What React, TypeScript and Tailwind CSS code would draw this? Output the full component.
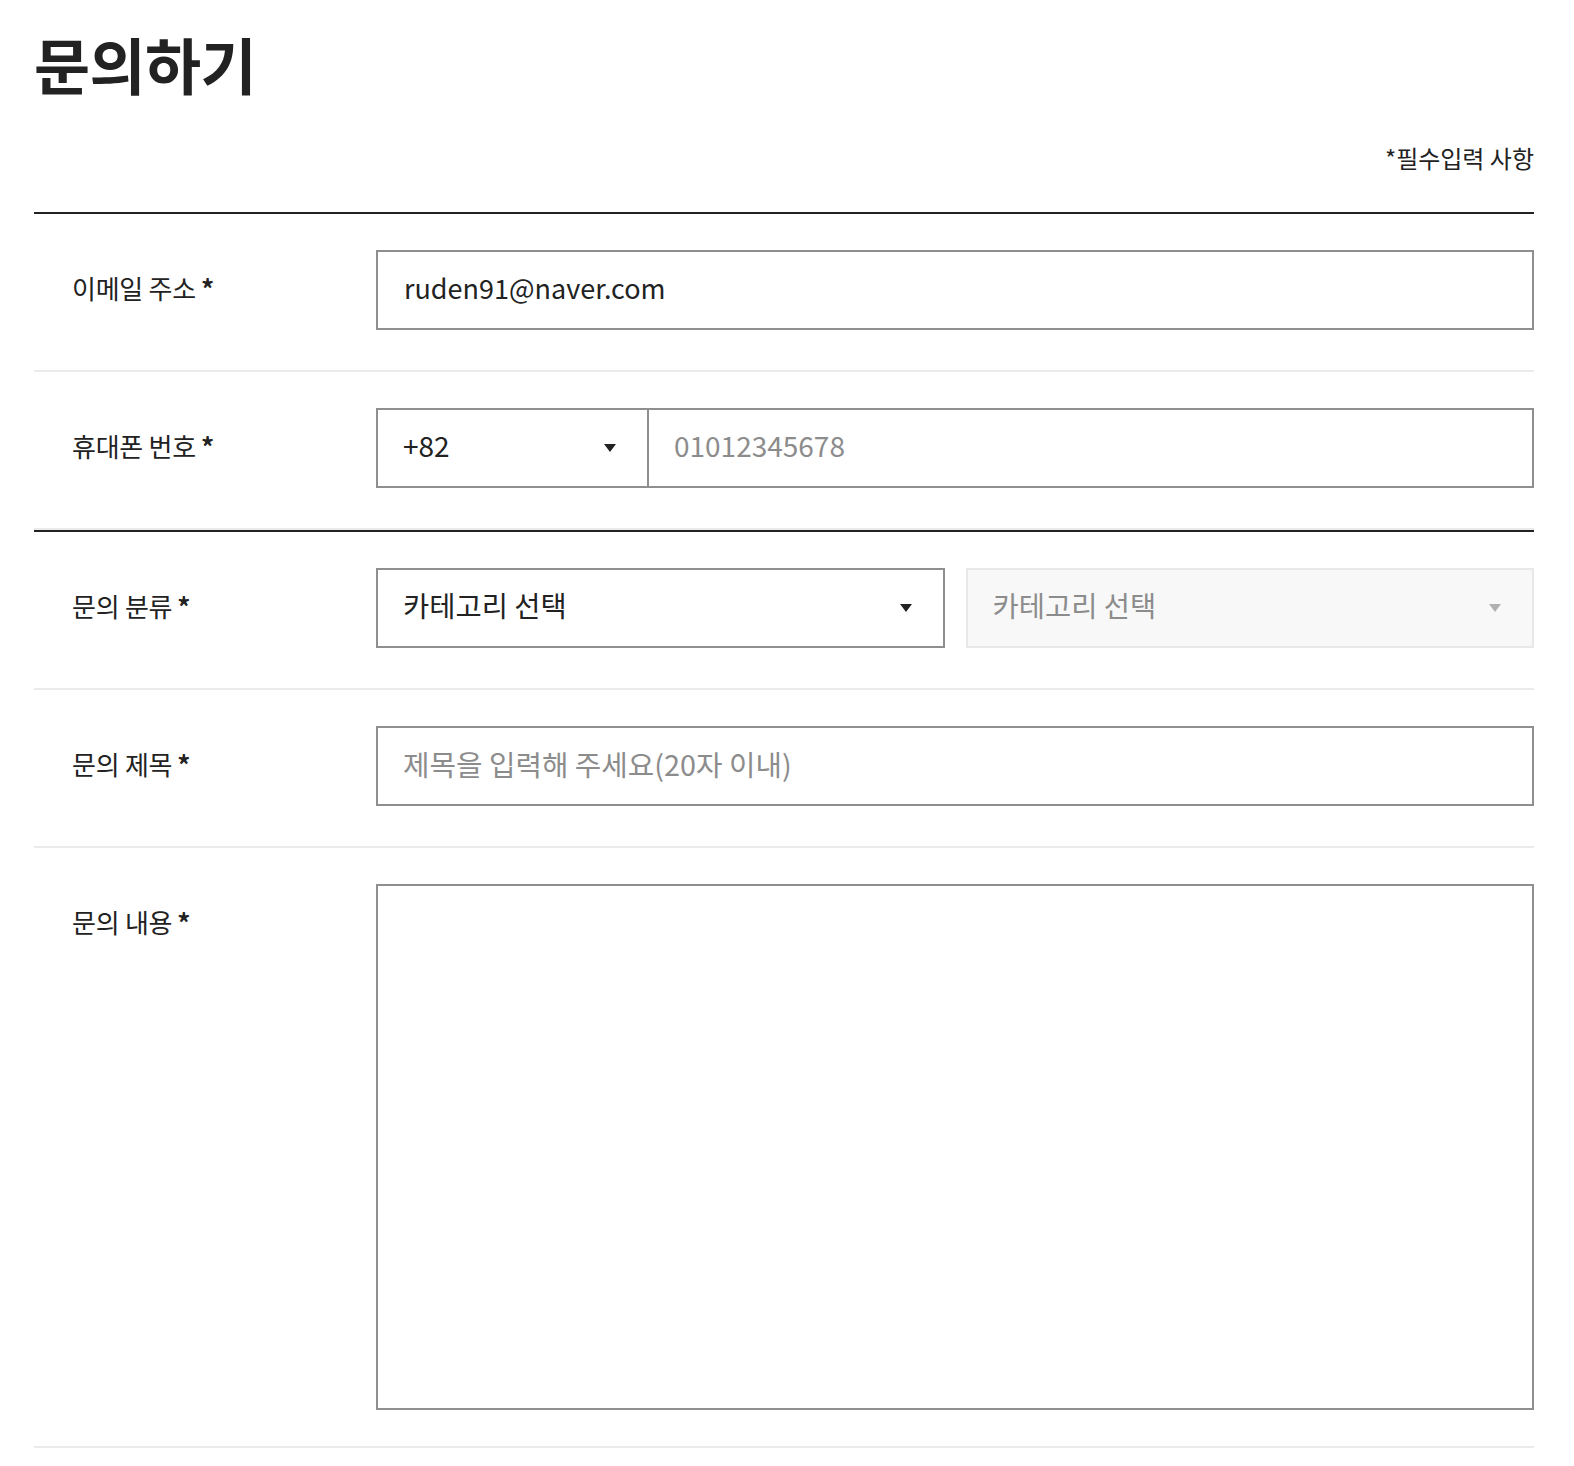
import React from 'react'

const Caret: React.FC<{ muted?: boolean }> = ({ muted }) => (
  <svg
    width="12"
    height="8"
    viewBox="0 0 12 8"
    className="pointer-events-none absolute right-[33px] top-1/2 -translate-y-1/2"
  >
    <polygon points="0,0 12,0 6,8" fill={muted ? '#b0b0b0' : '#222222'} />
  </svg>
)

const Label: React.FC<{ text: string }> = ({ text }) => (
  <div className="w-[342px] shrink-0 pl-[38px] pb-[6px] h-[80px] flex items-center text-[26px] tracking-[-0.01em] text-[#222]">
    {text}
    <span className="ml-[5px] font-bold">*</span>
  </div>
)

const Row: React.FC<{ label: string; last?: boolean; children: React.ReactNode }> = ({ label, last, children }) => (
  <div className={`flex items-start pt-[36px] border-b-2 border-[#ebebeb] ${last ? 'pb-[36px]' : 'pb-[40px]'}`}>
    <Label text={label} />
    <div className="flex-1 min-w-0">{children}</div>
  </div>
)

const inputBase =
  'h-[80px] w-full border-2 border-[#8f8f8f] bg-white pb-[6px] text-[#222] outline-none placeholder:text-[#8c8c8c]'

const App: React.FC = () => {
  return (
    <div className="h-[1466px] overflow-hidden bg-white font-['Noto_Sans_CJK_KR','Noto_Sans',sans-serif]">
      <div className="ml-[34px] w-[1500px]">
        <h1 className="pt-[33px] text-[61px] leading-none font-bold tracking-[-0.01em] text-[#222]">
          문의하기
        </h1>
        <p className="mt-[52px] mb-[42px] text-right text-[24px] leading-none text-[#222]">
          *필수입력 사항
        </p>

        <div className="border-t-2 border-[#222]">
          <Row label="이메일 주소">
            <input
              type="text"
              defaultValue="ruden91@naver.com"
              className={`${inputBase} pl-[26px] text-[27px]`}
            />
          </Row>
          <Row label="휴대폰 번호">
            <div className="flex">
              <div className="relative w-[273px] shrink-0">
                <select
                  defaultValue="+82"
                  className="h-[80px] w-full appearance-none border-2 border-[#8f8f8f] bg-white pl-[25px] pb-[6px] text-[28px] text-[#222] outline-none"
                >
                  <option value="+82">+82</option>
                  <option value="+1">+1</option>
                  <option value="+81">+81</option>
                </select>
                <Caret />
              </div>
              <input
                type="tel"
                placeholder="01012345678"
                className={`${inputBase} border-l-0 pl-[25px] text-[28px]`}
              />
            </div>
          </Row>
        </div>

        <div className="border-t-2 border-[#222]">
          <Row label="문의 분류">
            <div className="grid grid-cols-2 gap-[21px]">
              <div className="relative">
                <select
                  defaultValue=""
                  className="h-[80px] w-full appearance-none border-2 border-[#8f8f8f] bg-white pl-[25px] pb-[6px] text-[28.5px] text-[#222] outline-none"
                >
                  <option value="">카테고리 선택</option>
                  <option value="order">주문/결제</option>
                  <option value="delivery">배송</option>
                </select>
                <Caret />
              </div>
              <div className="relative">
                <select
                  disabled
                  defaultValue=""
                  className="h-[80px] w-full appearance-none border-2 border-[#e8e8e8] bg-[#f8f8f8] pl-[25px] pb-[6px] text-[28.5px] text-[#8c8c8c] outline-none"
                >
                  <option value="">카테고리 선택</option>
                </select>
                <Caret muted />
              </div>
            </div>
          </Row>
          <Row label="문의 제목">
            <input
              type="text"
              placeholder="제목을 입력해 주세요(20자 이내)"
              className={`${inputBase} pl-[25px] text-[28.8px]`}
            />
          </Row>
          <Row label="문의 내용" last>
            <textarea className="block h-[526px] w-full resize-none border-2 border-[#8f8f8f] bg-white p-[25px] text-[27px] text-[#222] outline-none" />
          </Row>
        </div>
      </div>
    </div>
  )
}

export default App
